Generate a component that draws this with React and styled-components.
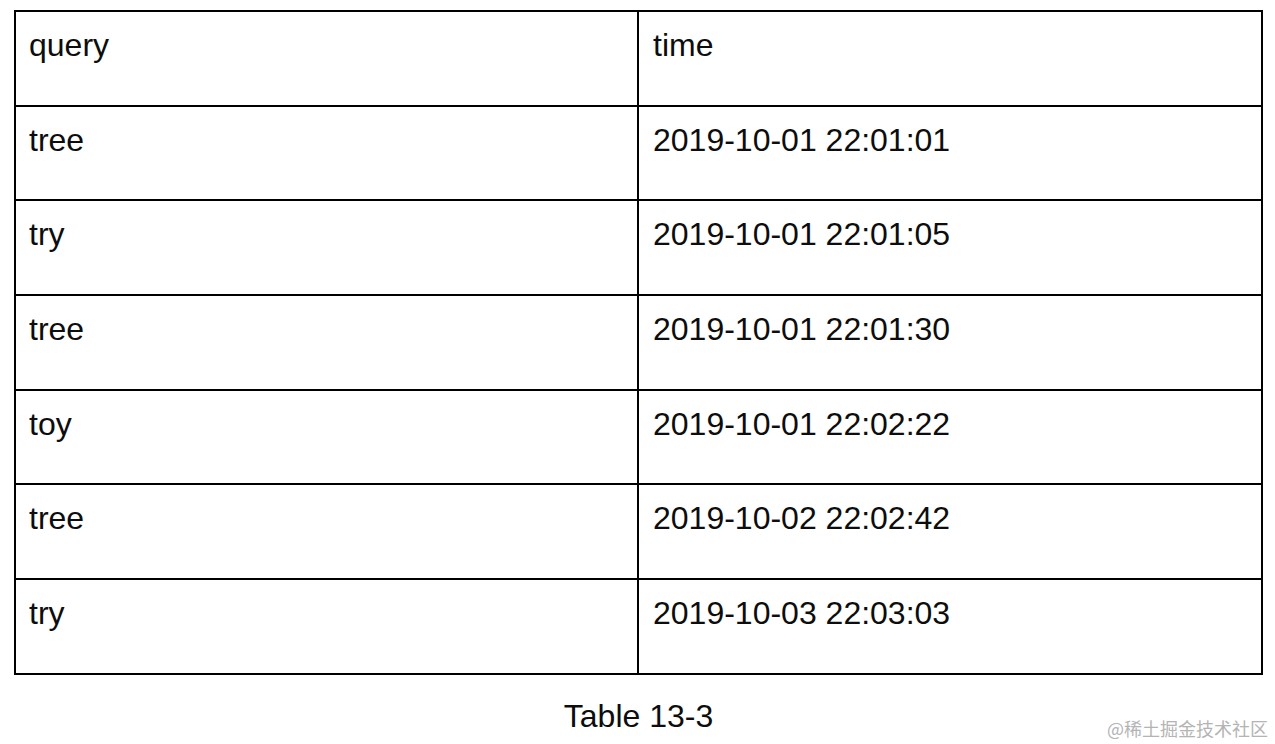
import React from "react";
import styled, { createGlobalStyle } from "styled-components";

const Global = createGlobalStyle`
  html, body { margin: 0; padding: 0; background: #fff; }
  body { font-family: "Liberation Sans", Arial, sans-serif; color: #111; }
`;

const Page = styled.div`
  position: relative;
  width: 1275px;
  height: 744px;
  overflow: hidden;
  padding: 10px 0 0 14px;
  box-sizing: border-box;
`;

const Grid = styled.div`
  display: grid;
  grid-template-columns: 621px 622px;
  grid-auto-rows: 92.7px;
  gap: 2px;
  padding: 2px;
  background: #000;
  width: 1249px;
  box-sizing: border-box;
`;

const Cell = styled.div`
  background: #fff;
  padding: 15px 13px 0 ${(p) => (p.$second ? "14px" : "13px")};
  font-size: 32px;
  line-height: 36px;
  color: #0d0d0d;
`;

const Caption = styled.div`
  width: 1249px;
  margin-top: 23px;
  text-align: center;
  font-size: 32px;
  line-height: 36px;
  color: #0d0d0d;
`;

const Watermark = styled.div`
  position: absolute;
  right: 7px;
  bottom: 6px;
  font-family: "Noto Sans CJK SC", "Liberation Sans", sans-serif;
  font-size: 18px;
  line-height: 20px;
  color: #b4b4b4;
`;

const rows = [
  ["query", "time"],
  ["tree", "2019-10-01 22:01:01"],
  ["try", "2019-10-01 22:01:05"],
  ["tree", "2019-10-01 22:01:30"],
  ["toy", "2019-10-01 22:02:22"],
  ["tree", "2019-10-02 22:02:42"],
  ["try", "2019-10-03 22:03:03"],
];

export default function App() {
  return (
    <Page>
      <Global />
      <Grid>
        {rows.map(([q, t], i) => (
          <React.Fragment key={i}>
            <Cell>{q}</Cell>
            <Cell $second>{t}</Cell>
          </React.Fragment>
        ))}
      </Grid>
      <Caption>Table 13-3</Caption>
      <Watermark>@稀土掘金技术社区</Watermark>
    </Page>
  );
}
